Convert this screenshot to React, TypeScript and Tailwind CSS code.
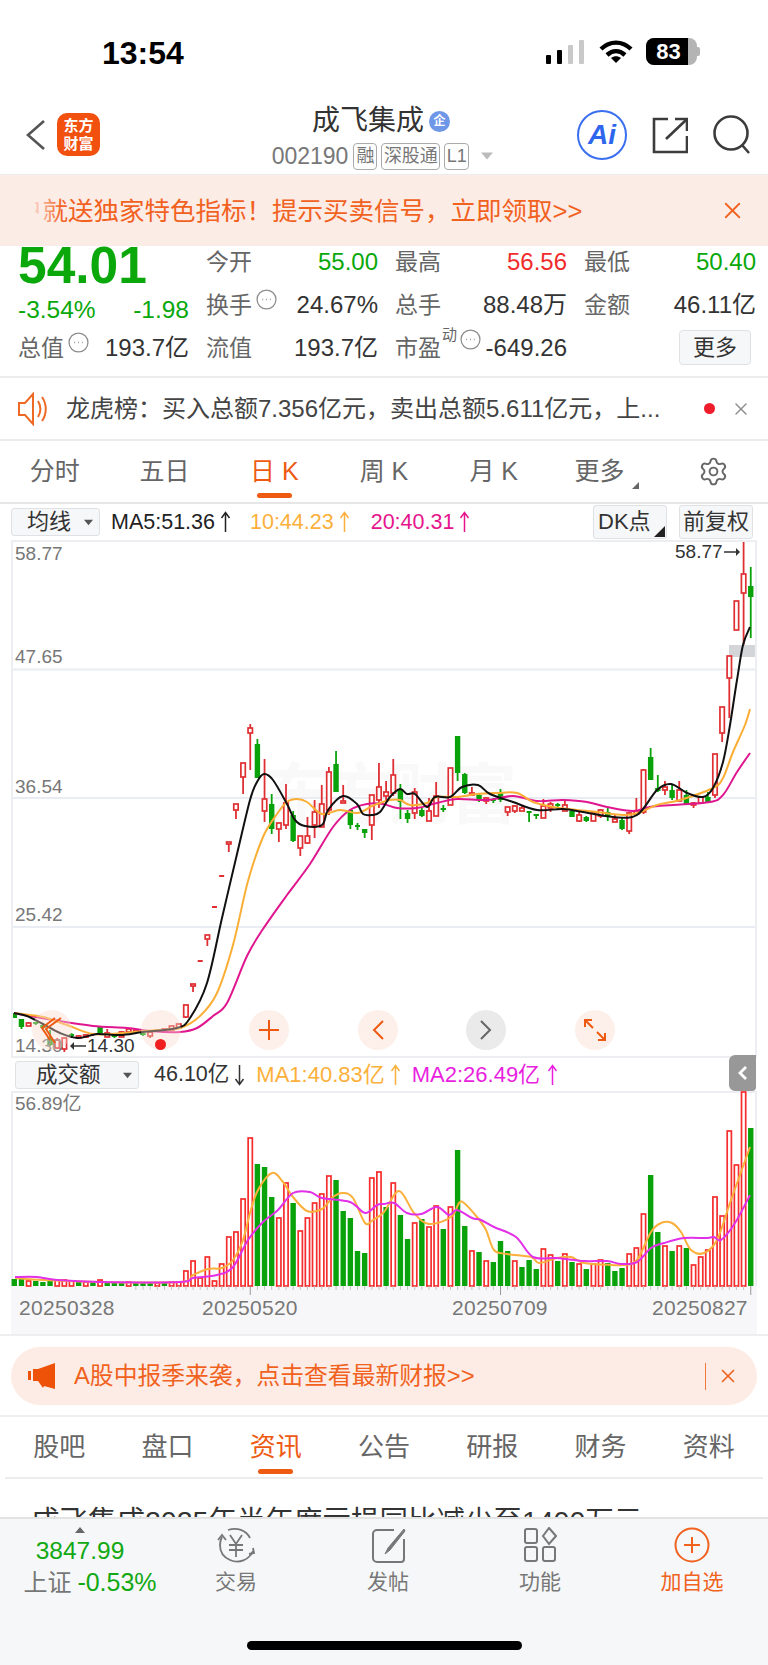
import { Settings, X } from "lucide-react";

type Candle = [number, number, number, number, "r" | "g"];

// high, body top, body bottom, low, colour (page pixels)
const candles: Candle[] = [
  [1013, 1013, 1018, 1018, "g"], [1019, 1019, 1027, 1029, "g"], [1022, 1023, 1026, 1026, "r"], [1022, 1023, 1024, 1025, "g"],
  [1024, 1025, 1028, 1029, "g"], [1030, 1038, 1045, 1046, "g"], [1038, 1040, 1048, 1049, "r"], [1038, 1038, 1049, 1052, "r"],
  [1033, 1035, 1036, 1038, "g"], [1035, 1036, 1038, 1039, "r"], [1034, 1035, 1037, 1038, "r"], [1033, 1034, 1035, 1036, "r"],
  [1026, 1027, 1033, 1034, "g"], [1029, 1033, 1037, 1037, "r"], [1033, 1035, 1037, 1038, "g"], [1031, 1032, 1037, 1037, "r"],
  [1029, 1029, 1032, 1033, "r"], [1030, 1030, 1032, 1032, "r"], [1032, 1033, 1035, 1036, "g"], [1031, 1032, 1036, 1038, "r"],
  [1030, 1030, 1031, 1032, "r"], [1029, 1029, 1031, 1031, "r"], [1026, 1026, 1030, 1030, "r"], [1024, 1024, 1028, 1028, "r"],
  [1005, 1005, 1017, 1018, "r"], [984, 984, 986, 992, "r"], [961, 961, 961, 961, "r"], [935, 935, 939, 946, "r"],
  [907, 907, 907, 907, "r"], [876, 876, 876, 876, "r"], [842, 842, 844, 852, "r"], [804, 804, 810, 819, "r"],
  [763, 763, 777, 794, "r"], [724, 728, 733, 770, "r"], [739, 744, 778, 778, "g"], [759, 799, 811, 822, "r"],
  [794, 804, 829, 834, "g"], [823, 823, 829, 842, "r"], [784, 803, 825, 829, "r"], [811, 815, 841, 842, "g"],
  [836, 836, 848, 856, "r"], [817, 836, 843, 844, "r"], [800, 812, 825, 838, "r"], [785, 804, 827, 827, "r"],
  [767, 772, 810, 815, "r"], [751, 764, 792, 792, "g"], [785, 801, 803, 803, "r"], [809, 810, 825, 829, "g"],
  [823, 826, 827, 830, "g"], [829, 829, 833, 838, "g"], [795, 795, 825, 840, "r"], [763, 787, 800, 808, "r"],
  [781, 792, 796, 801, "r"], [759, 775, 793, 796, "r"], [784, 789, 802, 819, "g"], [810, 813, 819, 823, "g"],
  [788, 792, 813, 819, "r"], [807, 810, 816, 817, "g"], [798, 811, 821, 821, "r"], [782, 796, 816, 816, "r"],
  [805, 808, 810, 812, "g"], [768, 768, 805, 805, "r"], [736, 736, 773, 781, "g"], [773, 774, 793, 794, "g"],
  [787, 793, 795, 795, "r"], [793, 795, 799, 802, "g"], [797, 798, 801, 804, "r"], [798, 800, 801, 803, "g"],
  [789, 792, 800, 802, "g"], [807, 807, 812, 816, "r"], [805, 806, 811, 813, "r"], [805, 808, 811, 811, "r"],
  [812, 812, 813, 822, "g"], [814, 814, 816, 819, "g"], [799, 806, 818, 818, "r"], [802, 804, 808, 812, "r"],
  [803, 805, 806, 810, "g"], [801, 805, 811, 811, "r"], [811, 811, 817, 817, "g"], [810, 815, 821, 822, "r"],
  [816, 817, 821, 822, "g"], [813, 813, 821, 821, "r"], [809, 810, 816, 818, "r"], [808, 812, 817, 821, "g"],
  [815, 819, 822, 822, "r"], [818, 820, 829, 830, "g"], [812, 813, 831, 834, "r"], [798, 811, 814, 815, "r"],
  [769, 770, 812, 814, "r"], [748, 757, 780, 780, "g"], [775, 788, 791, 792, "g"], [781, 787, 790, 795, "r"],
  [784, 790, 798, 800, "g"], [781, 790, 801, 801, "r"], [790, 795, 804, 804, "g"], [802, 803, 805, 808, "r"],
  [796, 797, 803, 803, "r"], [792, 797, 802, 802, "g"], [754, 754, 795, 798, "r"], [707, 707, 733, 742, "r"],
  [656, 656, 678, 718, "r"], [601, 601, 630, 630, "r"], [542, 574, 593, 645, "r"], [567, 586, 597, 638, "g"],
];

const ma5 = [[14, 1013], [27, 1016], [43, 1024], [60, 1033], [78, 1038], [97, 1034], [120, 1035], [143, 1032], [177, 1028], [190, 1018], [207, 983], [222, 918], [237, 854], [250, 800], [257, 782], [264, 774], [273, 780], [287, 804], [295, 820], [305, 826], [322, 825], [328, 810], [343, 796], [357, 804], [363, 814], [372, 815], [380, 812], [390, 797], [400, 789], [407, 794], [415, 794], [427, 807], [435, 797], [450, 797], [462, 787], [478, 785], [490, 794], [513, 802], [537, 810], [563, 809], [583, 812], [613, 817], [637, 815], [657, 790], [671, 784], [687, 793], [703, 797], [713, 788], [723, 762], [730, 725], [737, 680], [743, 645], [750, 627]];
const ma10 = [[14, 1013], [43, 1017], [67, 1025], [93, 1034], [123, 1033], [157, 1030], [180, 1028], [200, 1016], [217, 993], [233, 945], [248, 881], [263, 837], [277, 814], [287, 802], [297, 799], [307, 802], [322, 814], [340, 810], [358, 813], [372, 806], [380, 803], [390, 800], [400, 800], [410, 805], [427, 803], [437, 797], [457, 797], [477, 794], [497, 793], [517, 793], [533, 802], [553, 807], [577, 810], [597, 812], [623, 815], [638, 813], [657, 805], [680, 800], [713, 788], [723, 778], [733, 752], [745, 725], [750, 709]];
const ma20 = [[14, 1013], [53, 1020], [93, 1026], [127, 1028], [150, 1031], [180, 1032], [197, 1028], [213, 1016], [227, 1003], [247, 956], [263, 929], [287, 895], [310, 864], [333, 827], [350, 810], [367, 804], [383, 804], [397, 808], [417, 808], [437, 803], [457, 799], [487, 800], [513, 796], [537, 801], [563, 800], [587, 802], [607, 807], [633, 811], [650, 807], [673, 805], [710, 802], [723, 795], [737, 772], [750, 753]];

// tops of the volume bars, red bars are hollow
const volumes: [number, "r" | "g"][] = [
  [1279, "g"], [1279, "g"], [1281, "r"], [1281, "g"], [1282, "g"], [1281, "g"], [1280, "r"], [1280, "r"], [1281, "r"], [1281, "g"], [1282, "r"], [1282, "g"], [1280, "r"], [1282, "g"], [1282, "g"], [1282, "g"], [1282, "r"], [1282, "g"], [1282, "g"], [1282, "g"], [1283, "r"], [1282, "g"], [1282, "r"], [1282, "r"],
  [1271, "r"], [1261, "r"], [1278, "r"], [1257, "r"], [1281, "r"], [1264, "r"], [1237, "r"], [1232, "r"], [1199, "r"], [1138, "r"], [1164, "g"], [1167, "g"], [1197, "g"], [1218, "r"], [1183, "r"], [1203, "g"], [1231, "r"], [1218, "r"], [1203, "r"], [1194, "r"], [1176, "r"], [1180, "g"], [1211, "g"], [1218, "g"], [1251, "g"], [1253, "g"], [1178, "r"], [1172, "r"],
  [1207, "g"], [1183, "r"], [1215, "g"], [1239, "g"], [1223, "r"], [1219, "g"], [1227, "r"], [1206, "r"], [1229, "g"], [1207, "r"], [1150, "g"], [1226, "g"], [1251, "r"], [1252, "g"], [1261, "r"], [1262, "g"], [1241, "g"], [1251, "g"], [1261, "r"], [1267, "g"], [1260, "g"], [1269, "g"], [1249, "r"], [1255, "r"], [1261, "g"], [1254, "r"], [1262, "g"], [1264, "r"], [1269, "g"], [1264, "r"], [1260, "r"], [1263, "g"], [1271, "g"], [1268, "g"], [1254, "r"], [1248, "r"], [1214, "r"], [1175, "g"], [1232, "g"], [1246, "r"], [1251, "g"], [1246, "r"], [1248, "g"], [1265, "r"], [1257, "r"], [1250, "r"], [1197, "r"], [1216, "r"], [1131, "r"], [1165, "r"], [1092, "r"], [1128, "g"],
];

const volMa1 = [[15, 1278], [43, 1280], [100, 1282], [180, 1282], [193, 1275], [208, 1269], [222, 1268], [233, 1260], [243, 1240], [250, 1213], [258, 1190], [272, 1173], [283, 1182], [293, 1197], [307, 1211], [322, 1209], [333, 1197], [343, 1193], [353, 1198], [365, 1223], [373, 1220], [384, 1212], [399, 1191], [414, 1213], [429, 1224], [451, 1217], [459, 1203], [464, 1203], [477, 1217], [486, 1230], [494, 1250], [507, 1254], [531, 1257], [539, 1263], [557, 1258], [571, 1257], [584, 1263], [611, 1265], [624, 1265], [637, 1260], [651, 1232], [661, 1223], [672, 1223], [681, 1232], [691, 1250], [704, 1253], [717, 1240], [731, 1200], [750, 1147]];
const volMa2 = [[15, 1277], [37, 1277], [57, 1280], [100, 1282], [180, 1282], [193, 1278], [217, 1275], [233, 1267], [248, 1240], [263, 1222], [278, 1210], [293, 1193], [310, 1192], [322, 1198], [350, 1202], [365, 1213], [377, 1205], [384, 1204], [394, 1203], [407, 1213], [421, 1214], [437, 1207], [449, 1215], [457, 1210], [472, 1218], [481, 1220], [494, 1227], [516, 1237], [533, 1257], [557, 1258], [584, 1261], [607, 1261], [621, 1264], [637, 1262], [651, 1248], [664, 1243], [684, 1238], [707, 1238], [714, 1237], [721, 1240], [735, 1223], [750, 1195]];

const candleX = (i: number) => 14.3 + 7.15 * i;

// catmull-rom through the points so the averages read as curves
function smooth(pts: number[][]) {
  let d = `M${pts[0][0]} ${pts[0][1]}`;
  for (let i = 0; i < pts.length - 1; i++) {
    const p0 = pts[Math.max(i - 1, 0)];
    const p1 = pts[i];
    const p2 = pts[i + 1];
    const p3 = pts[Math.min(i + 2, pts.length - 1)];
    const c1x = p1[0] + (p2[0] - p0[0]) / 6;
    const c1y = p1[1] + (p2[1] - p0[1]) / 6;
    const c2x = p2[0] - (p3[0] - p1[0]) / 6;
    const c2y = p2[1] - (p3[1] - p1[1]) / 6;
    d += ` C${c1x.toFixed(1)} ${c1y.toFixed(1)} ${c2x.toFixed(1)} ${c2y.toFixed(1)} ${p2[0]} ${p2[1]}`;
  }
  return d;
}

function Caret({ className }: { className: string }) {
  return (
    <svg className={className} viewBox="0 0 10 6" fill="currentColor">
      <path d="M0 0h10L5 6z" />
    </svg>
  );
}

function Arrow({ down }: { down?: boolean }) {
  return (
    <svg className={`ml-[5px] w-[11px] h-[22px] ${down ? "rotate-180" : ""}`} viewBox="0 0 11 22" fill="none" stroke="currentColor" strokeWidth="1.500">
      <path d="M5.500 21V2M1.500 7l4-5.500 4 5.500" />
    </svg>
  );
}

function SideArrow({ left }: { left?: boolean }) {
  return (
    <svg className={`w-[16px] h-[10px] ${left ? "rotate-180" : ""}`} viewBox="0 0 16 10" fill="#333">
      <path d="M0 4.200h12V1l4 4-4 4V5.800H0z" />
    </svg>
  );
}

function StatusBar() {
  return (
    <div className="h-[100px] flex items-start justify-between pt-[34px] pl-[102px] pr-[68px]">
      <span className="text-[32px] leading-[38px] font-bold text-black">13:54</span>
      <div className="flex items-center pt-[4px]">
        <div className="flex items-end gap-[6px] h-[24px]">
          <div className="w-[5px] h-[9px] rounded-[1px] bg-black" />
          <div className="w-[5px] h-[14px] rounded-[1px] bg-black" />
          <div className="w-[5px] h-[19px] rounded-[1px] bg-[#c9c9c9]" />
          <div className="w-[5px] h-[24px] rounded-[1px] bg-[#c9c9c9]" />
        </div>
        <svg className="ml-[15px] w-[34px] h-[24px]" viewBox="0 0 34 24" fill="none" stroke="black" strokeWidth="4.400">
          <path d="M2 9c9-8.500 21-8.500 30 0" />
          <path d="M8 15c5.500-5 12.500-5 18 0" />
          <path d="M17 23l-5-5c3-2.500 7-2.500 10 0z" fill="black" stroke="none" />
        </svg>
        <div className="ml-[13px] flex items-center">
          <div className="w-[51px] h-[27px] rounded-[8px] overflow-hidden flex bg-[#b4b4b4]">
            <div className="w-[42px] h-full bg-black" />
          </div>
          <div className="w-[3px] h-[9px] rounded-r-[2px] bg-[#b4b4b4]" />
          <span className="absolute w-[51px] pr-[6px] text-center text-white font-bold text-[22px] leading-[27px]">83</span>
        </div>
      </div>
    </div>
  );
}

function Header() {
  return (
    <div className="relative h-[75px] border-b border-[#ececec]">
      <div className="absolute left-[25px] top-[19px]">
        <svg className="w-[21px] h-[32px]" viewBox="0 0 21 32" fill="none" stroke="#555" strokeWidth="2.600">
          <path d="M19 2L3 16l16 14" />
        </svg>
      </div>
      <div className="absolute left-[57px] top-[13px] w-[43px] h-[43px] rounded-[10px] bg-[#f1500f] flex items-center justify-center text-white font-bold text-[15px] leading-[18px] text-center">
        东方
        <br />
        财富
      </div>
      <div className="flex flex-col items-center pr-[6px]">
        <div className="flex items-center h-[40px] mt-[1px]">
          <span className="text-[28px] leading-[38px] text-[#333]">成飞集成</span>
          <span className="ml-[5px] w-[21px] h-[21px] rounded-full bg-[#6f97e8] text-white text-[12px] font-bold leading-[21px] text-center">企</span>
        </div>
        <div className="flex items-center h-[30px] ml-[3px] text-[#777]">
          <span className="text-[23px] leading-[28px] mr-[5px]">002190</span>
          <span className="h-[27px] w-[24px] border border-[#aaa] rounded-[4px] text-[18px] leading-[25px] text-center">融</span>
          <span className="ml-[4px] h-[27px] w-[59px] border border-[#aaa] rounded-[4px] text-[18px] leading-[25px] text-center">深股通</span>
          <span className="ml-[4px] h-[27px] w-[25px] border border-[#aaa] rounded-[4px] text-[18px] leading-[25px] text-center">L1</span>
          <Caret className="ml-[12px] w-[12px] h-[8px] text-[#bbb]" />
        </div>
      </div>
      <div className="absolute right-[141px] top-[10px] w-[50px] h-[50px] rounded-full border-[2.500px] border-[#3a6ff0] flex items-center justify-center text-[#2f66ee] text-[28px] font-bold italic">
        Ai
      </div>
      <svg className="absolute left-[652px] top-[17px] w-[36px] h-[37px]" viewBox="0 0 36 37" fill="none" stroke="#3c3c3c" strokeWidth="2.600">
        <path d="M16 2H2v33h33V19" />
        <path d="M14 22L34 3" />
        <path d="M23 2h12v12" />
      </svg>
      <svg className="absolute left-[713px] top-[15px] w-[38px] h-[39px]" viewBox="0 0 38 39" fill="none" stroke="#3c3c3c" strokeWidth="2.600">
        <circle cx="18" cy="18" r="16.500" />
        <path d="M29 30l7 8" />
      </svg>
    </div>
  );
}

function TopBanner() {
  return (
    <div className="relative h-[71px] bg-[#fcece6] flex items-center text-[#f2621f]">
      <div className="ml-[35px] w-[560px] overflow-hidden whitespace-nowrap text-[25.500px] leading-[34px]">
        <span className="ml-[-18px]">户就送独家特色指标！提示买卖信号，立即领取&gt;&gt;</span>
      </div>
      <div className="absolute left-[28px] top-0 h-full w-[34px] bg-gradient-to-r from-[#fcece6] to-transparent" />
      <X className="absolute left-[719px] top-[22px] w-[27px] h-[27px]" strokeWidth={1.600} />
    </div>
  );
}

function Hint() {
  return (
    <svg className="absolute w-[21px] h-[21px]" viewBox="0 0 20 20" fill="none" stroke="#8d8d8d" strokeWidth="1.200">
      <circle cx="10" cy="10" r="9" />
      <path d="M6 10h.8M9.600 10h.8M13.200 10h.8" strokeWidth="1.600" />
    </svg>
  );
}

function Cell({ label, value, color, hint }: { label: string; value: string; color: string; hint?: boolean }) {
  return (
    <div className="relative flex items-center justify-between">
      <span className="text-[#666] text-[23px]">{label}</span>
      {hint && (
        <span className="absolute left-[50px] top-[-1px]">
          <Hint />
        </span>
      )}
      <span className={`text-[24px] ${color}`}>{value}</span>
    </div>
  );
}

function Quote() {
  return (
    <div className="h-[132px] border-b-2 border-[#ececec] pl-[18px] pr-[11px]">
      <div className="grid grid-cols-[171px_172px_172px_172px] grid-rows-[38px_42px_44px] gap-x-[17px] leading-[30px]">
        <div className="pt-[1px] text-[51.500px] leading-[36px] font-bold text-[#0aa80a]">54.01</div>
        <div className="pb-[6px] flex items-center">
          <div className="flex-1"><Cell label="今开" value="55.00" color="text-[#0aa80a]" /></div>
        </div>
        <div className="pb-[6px] flex items-center">
          <div className="flex-1"><Cell label="最高" value="56.56" color="text-[#f02c2c]" /></div>
        </div>
        <div className="pb-[6px] flex items-center">
          <div className="flex-1"><Cell label="最低" value="50.40" color="text-[#0aa80a]" /></div>
        </div>

        <div className="flex items-end justify-between pb-[1px] text-[24.500px] text-[#0aa80a]">
          <span>-3.54%</span>
          <span>-1.98</span>
        </div>
        <div className="flex items-center">
          <div className="flex-1"><Cell label="换手" value="24.67%" color="text-[#333]" hint /></div>
        </div>
        <div className="flex items-center">
          <div className="flex-1"><Cell label="总手" value="88.48万" color="text-[#333]" /></div>
        </div>
        <div className="flex items-center">
          <div className="flex-1"><Cell label="金额" value="46.11亿" color="text-[#333]" /></div>
        </div>

        <div className="flex items-center">
          <div className="flex-1"><Cell label="总值" value="193.7亿" color="text-[#333]" hint /></div>
        </div>
        <div className="flex items-center">
          <div className="flex-1"><Cell label="流值" value="193.7亿" color="text-[#333]" /></div>
        </div>
        <div className="relative flex items-center justify-between text-[23px]">
          <span className="text-[#666]">市盈</span>
          <span className="absolute left-[47px] top-[0px] text-[15px] leading-[18px] text-[#666]">动</span>
          <span className="absolute left-[65px] top-[3px]"><Hint /></span>
          <span className="text-[#333] text-[24px]">-649.26</span>
        </div>
        <div className="flex items-center justify-end pr-[5px] pb-[2px]">
          <div className="w-[72px] h-[35px] rounded-[4px] bg-[#f6f7f9] border border-[#dfe1e5] text-[22px] leading-[33px] text-center text-[#333]">更多</div>
        </div>
      </div>
    </div>
  );
}

function Notice() {
  return (
    <div className="h-[63px] border-b-2 border-[#ececec] flex items-center pl-[18px] pr-[17px]">
      <svg className="w-[30px] h-[34px] shrink-0" viewBox="0 0 30 34" fill="none" stroke="#ee6a24" strokeWidth="2">
        <path d="M1 11h6l8-9v30l-8-9H1z" />
        <path d="M20 9c3 5 3 11 0 16" />
        <path d="M24 5c5 7 5 17 0 24" />
      </svg>
      <span className="ml-[18px] text-[24px] text-[#444] whitespace-nowrap">龙虎榜：买入总额7.356亿元，卖出总额5.611亿元，上...</span>
      <div className="ml-auto w-[11px] h-[11px] rounded-full bg-[#ef1c2b]" />
      <X className="ml-[16px] w-[20px] h-[20px] text-[#8e8e8e]" strokeWidth={1.800} />
    </div>
  );
}

function KTabs() {
  const tabs = ["分时", "五日", "日 K", "周 K", "月 K", "更多"];
  return (
    <div className="h-[63px] border-b-2 border-[#e6e6e6] grid grid-cols-7 items-center text-[#666] text-[25px]">
      {tabs.map((t) => (
        <div key={t} className={`relative h-full flex items-center justify-center ${t === "更多" ? "pr-[8px]" : ""}`}>
          <span className={t === "日 K" ? "text-[#ee5a12]" : ""}>{t}</span>
          {t === "日 K" && <div className="absolute bottom-[4px] w-[35px] h-[5px] rounded-full bg-[#ee5a12]" />}
          {t === "更多" && (
            <svg className="absolute left-[83px] top-[41px] w-[7px] h-[7px]" viewBox="0 0 7 7" fill="#666">
              <path d="M7 0v7H0z" />
            </svg>
          )}
        </div>
      ))}
      <div className="flex justify-center">
        <Settings className="w-[31px] h-[31px] text-[#666]" strokeWidth={1.500} />
      </div>
    </div>
  );
}

function MaRow() {
  return (
    <div className="h-[36px] flex items-center text-[21.500px] whitespace-nowrap">
      <div className="ml-[11px] w-[89px] h-[28px] rounded-[3px] bg-[#f6f7f9] border border-[#dfe1e5] relative text-[22px] leading-[26px] pl-[15px] text-[#333]">
        均线
        <Caret className="absolute right-[6px] top-[10px] w-[9px] h-[7px] text-[#555]" />
      </div>
      <span className="ml-[11px] text-[#222]">MA5:51.36</span>
      <span className="text-[#222]"><Arrow /></span>
      <span className="ml-[19px] text-[#fbb03b]">10:44.23</span>
      <span className="text-[#fbb03b]"><Arrow /></span>
      <span className="ml-[21px] text-[#e6148c]">20:40.31</span>
      <span className="text-[#e6148c]"><Arrow /></span>
      <div className="ml-auto relative w-[74px] h-[34px] rounded-[3px] bg-[#f6f7f9] border border-[#dfe1e5] text-[22px] leading-[32px] pl-[4px] text-[#333]">
        DK点
        <svg className="absolute right-[1px] bottom-[1px] w-[11px] h-[11px]" viewBox="0 0 10 10" fill="#222">
          <path d="M10 0v10H0z" />
        </svg>
      </div>
      <div className="ml-[12px] mr-[15px] w-[74px] h-[34px] rounded-[3px] bg-[#f6f7f9] border border-[#dfe1e5] text-[22px] leading-[32px] text-center text-[#333]">前复权</div>
    </div>
  );
}

function CircleBtn({ gray, children }: { gray?: boolean; children: React.ReactNode }) {
  return (
    <div className={`w-[40px] h-[40px] rounded-full flex items-center justify-center ${gray ? "bg-[#e9e9e9]/95" : "bg-[#fbd9cb]/40"}`}>
      {children}
    </div>
  );
}

function PriceChart() {
  return (
    <div className="relative mx-[11px] w-[746px] h-[518px] border-x-2 border-b-2 border-t-2 border-[#eceef2] overflow-hidden">
      <div className="absolute left-[252px] top-[213px] text-[66px] leading-[80px] font-bold text-[#f9f9f9] tracking-[-4px] whitespace-nowrap">东方财富</div>
      <svg className="absolute left-[-2px] top-[-2px] w-[746px] h-[518px]" viewBox="11 540 746 518" fill="none">
        <line x1="11" x2="757" y1="669.500" y2="669.500" stroke="#e9ecf2" strokeWidth="2" />
        <line x1="11" x2="757" y1="798" y2="798" stroke="#e9ecf2" strokeWidth="2" />
        <line x1="11" x2="757" y1="927" y2="927" stroke="#e9ecf2" strokeWidth="2" />
        <rect x="729" y="645" width="28" height="12" fill="#d3d5d9" />
        {candles.map(([h, t, b, l, c], i) => {
          const x = candleX(i);
          const col = c === "r" ? "#df2f33" : "#0aa20a";
          const dash = b - t <= 1;
          return (
            <g key={i}>
              <line x1={x} x2={x} y1={h} y2={t} stroke={col} strokeWidth="1.800" />
              <line x1={x} x2={x} y1={b} y2={l} stroke={col} strokeWidth="1.800" />
              {dash ? (
                <line x1={x - 2.500} x2={x + 2.500} y1={t} y2={t} stroke={col} strokeWidth="2" />
              ) : c === "r" ? (
                <rect x={x - 2.200} y={t} width="4.400" height={b - t} fill="white" stroke={col} strokeWidth="1.700" />
              ) : (
                <rect x={x - 2.700} y={t} width="5.400" height={b - t} fill={col} />
              )}
            </g>
          );
        })}
        <path d={smooth(ma20)} stroke="#e0168f" strokeWidth="2" />
        <path d={smooth(ma10)} stroke="#fbae35" strokeWidth="2" />
        <path d={smooth(ma5)} stroke="#111" strokeWidth="2" />
      </svg>

      <span className="absolute left-[2px] top-[1px] text-[19px] leading-[22px] text-[#777]">58.77</span>
      <span className="absolute left-[2px] top-[104px] text-[19px] leading-[22px] text-[#777]">47.65</span>
      <span className="absolute left-[2px] top-[234px] text-[19px] leading-[22px] text-[#777]">36.54</span>
      <span className="absolute left-[2px] top-[362px] text-[19px] leading-[22px] text-[#777]">25.42</span>
      <span className="absolute left-[2px] top-[493px] text-[19px] leading-[22px] text-[#777]">14.30</span>
      <div className="absolute left-[662px] top-[-1px] flex items-center gap-[1px] text-[19px] leading-[22px] text-[#333]">
        58.77
        <SideArrow />
      </div>
      <div className="absolute left-[57px] top-[493px] flex items-center gap-[1px] text-[19px] leading-[22px] text-[#333]">
        <SideArrow left />
        14.30
      </div>

      <div className="absolute left-[19px] top-[468px] w-[583px] flex justify-between">
        <CircleBtn>
          <svg className="w-[24px] h-[28px]" viewBox="0 0 24 28" fill="none" stroke="#ee5a12" strokeWidth="2">
            <path d="M21 2L6 13l9 14" />
            <path d="M15 2L2 12l8 12" />
          </svg>
        </CircleBtn>
        <CircleBtn>
          <div className="w-[11px] h-[11px] rounded-full bg-[#ef1f20] mt-[28px]" />
        </CircleBtn>
        <CircleBtn>
          <svg className="w-[20px] h-[20px]" viewBox="0 0 20 20" stroke="#ee5a12" strokeWidth="2">
            <path d="M10 0v20M0 10h20" />
          </svg>
        </CircleBtn>
        <CircleBtn>
          <svg className="w-[12px] h-[20px]" viewBox="0 0 12 20" fill="none" stroke="#ee5a12" strokeWidth="2">
            <path d="M11 1L2 10l9 9" />
          </svg>
        </CircleBtn>
        <CircleBtn gray>
          <svg className="w-[12px] h-[20px]" viewBox="0 0 12 20" fill="none" stroke="#666" strokeWidth="2">
            <path d="M1 1l9 9-9 9" />
          </svg>
        </CircleBtn>
        <CircleBtn>
          <svg className="w-[22px] h-[22px]" viewBox="0 0 22 22" fill="none" stroke="#ee5a12" strokeWidth="2">
            <path d="M2 2l7 7M1 8V1h7" />
            <path d="M20 20l-7-7M21 14v7h-7" />
          </svg>
        </CircleBtn>
      </div>
    </div>
  );
}

function VolRow() {
  return (
    <div className="relative h-[33px] flex items-center text-[21.500px] whitespace-nowrap">
      <div className="ml-[15px] w-[124px] h-[28px] rounded-[3px] bg-[#f6f7f9] border border-[#dfe1e5] relative text-[21.500px] leading-[26px] pl-[20px] text-[#333]">
        成交额
        <Caret className="absolute right-[6px] top-[10px] w-[9px] h-[7px] text-[#555]" />
      </div>
      <span className="ml-[15px] text-[#333]">46.10亿</span>
      <span className="text-[#333]"><Arrow down /></span>
      <span className="ml-[11px] text-[22px] text-[#fbb03b]">MA1:40.83亿</span>
      <span className="text-[#fbb03b]"><Arrow /></span>
      <span className="ml-[11px] text-[22px] text-[#e91fe0]">MA2:26.49亿</span>
      <span className="ml-[2px] text-[#e91fe0]"><Arrow /></span>
      <div className="absolute left-[729px] top-[-3px] w-[27px] h-[36px] rounded-l-[6px] rounded-br-[4px] bg-[#989898] flex items-center justify-center">
        <svg className="w-[11px] h-[16px]" viewBox="0 0 11 16" fill="none" stroke="white" strokeWidth="2.800">
          <path d="M9 2L3 8l6 6" />
        </svg>
      </div>
    </div>
  );
}

function VolChart() {
  return (
    <div className="relative mx-[11px] w-[746px] h-[243px] border-x-2 border-t-2 border-[#eceef2]">
      <span className="absolute left-[2px] top-[0px] text-[19px] leading-[22px] text-[#777]">56.89亿</span>
      <div className="absolute left-[-2px] top-[193px] w-[746px] h-[48px] bg-[#f7f7f9]" />
      <svg className="absolute left-[-2px] top-[-2px] w-[746px] h-[244px]" viewBox="11 1091 746 244" fill="none">
        {volumes.map(([top, c], i) => {
          const x = candleX(i);
          const major = i === 33 || i === 68 || i === 103;
          const bar = c === "r" ? (
            <rect x={x - 2.100} y={top} width="4.200" height={1286 - top} fill="white" stroke="#f62d2d" strokeWidth="1.700" />
          ) : (
            <rect x={x - 2.700} y={top} width="5.400" height={1286 - top} fill="#0aa20a" />
          );
          return (
            <g key={i}>
              {bar}
              {i > 16 && <line x1={x} x2={x} y1="1286" y2={major ? 1295 : 1290} stroke={major ? "#999" : "#c4c4c4"} strokeWidth="1" />}
            </g>
          );
        })}
        <path d={smooth(volMa1)} stroke="#fbb03b" strokeWidth="2" />
        <path d={smooth(volMa2)} stroke="#e22fe8" strokeWidth="2" />
      </svg>
      <span className="absolute left-[6px] top-[203px] text-[21px] leading-[24px] text-[#777] tracking-[0.3px]">20250328</span>
      <span className="absolute left-[189px] top-[203px] text-[21px] leading-[24px] text-[#777] tracking-[0.3px]">20250520</span>
      <span className="absolute left-[439px] top-[203px] text-[21px] leading-[24px] text-[#777] tracking-[0.3px]">20250709</span>
      <span className="absolute left-[639px] top-[203px] text-[21px] leading-[24px] text-[#777] tracking-[0.3px]">20250827</span>
    </div>
  );
}

function PromoBanner() {
  return (
    <div className="h-[83px] border-t-2 border-b-2 border-[#eeeeee] px-[11px] pt-[11px]">
      <div className="h-[58px] rounded-full bg-[#fdece5] flex items-center pl-[17px] text-[#f0621e]">
        <svg className="w-[28px] h-[26px]" viewBox="0 0 28 26" fill="#ee5208">
          <path d="M0 8h3v9H0zM5 6h5L27 0v26l-11-3-1 2-5-7H5z" />
        </svg>
        <span className="ml-[18px] text-[23.800px] whitespace-nowrap">A股中报季来袭，点击查看最新财报&gt;&gt;</span>
        <div className="ml-[230px] w-px h-[27px] bg-[#ef7a3e]" />
        <X className="ml-[11px] w-[22px] h-[22px]" strokeWidth={1.800} />
      </div>
    </div>
  );
}

function InfoTabs() {
  const tabs = ["股吧", "盘口", "资讯", "公告", "研报", "财务", "资料"];
  return (
    <div className="mx-[5px] h-[62px] border-b-2 border-[#ececec] grid grid-cols-7 text-[26px] text-[#666]">
      {tabs.map((t) => (
        <div key={t} className="relative flex items-center justify-center">
          <span className={t === "资讯" ? "text-[#ee5a12]" : ""}>{t}</span>
          {t === "资讯" && <div className="absolute bottom-[3px] w-[35px] h-[5px] rounded-full bg-[#ee5a12]" />}
        </div>
      ))}
    </div>
  );
}

function Footer() {
  return (
    <div className="relative h-[148px] bg-[#f6f7f9] border-t-2 border-[#e3e3e3]">
      <div className="flex">
        <div className="w-[160px] flex flex-col items-center">
          <Caret className="mt-[8px] w-[12px] h-[6px] text-[#666] rotate-180" />
          <span className="mt-[4px] text-[24.500px] leading-[28px] text-[#12a912]">3847.99</span>
          <div className="mt-[1px] ml-[20px] text-[24px] leading-[32px] whitespace-nowrap">
            <span className="text-[#777]">上证</span>
            <span className="ml-[6px] text-[25px] text-[#12a912]">-0.53%</span>
          </div>
        </div>
        <div className="flex-1 grid grid-cols-4 pt-[8px] text-[21px] text-[#777]">
          <div className="flex flex-col items-center">
            <svg className="w-[40px] h-[36px]" viewBox="0 0 40 36" fill="none" stroke="#777" strokeWidth="1.800">
              <path d="M12 3c9-3 18 0 22 8M37 24c-4 9-14 13-23 9-7-3-10-9-10-15 0-3 .5-5 2-8" />
              <path d="M2 13l4-5 4 5M33 27l5-1-1-5" />
              <path d="M14 8l6 9 6-9M13 18h14M13 23h14M20 17v13" />
            </svg>
            <span className="mt-[3px]">交易</span>
          </div>
          <div className="flex flex-col items-center">
            <svg className="w-[36px] h-[36px]" viewBox="0 0 36 36" fill="none" stroke="#777" strokeWidth="2">
              <path d="M24 3H7a4 4 0 0 0-4 4v24a4 4 0 0 0 4 4h24a3 3 0 0 0 3-3V12" />
              <path d="M34 2L18 21l-3 6 5-4L35 4z" fill="#777" strokeWidth="1" />
            </svg>
            <span className="mt-[3px]">发帖</span>
          </div>
          <div className="flex flex-col items-center">
            <svg className="w-[34px] h-[36px]" viewBox="0 0 34 36" fill="none" stroke="#777" strokeWidth="2">
              <rect x="2" y="2" width="12" height="14" rx="2" />
              <rect x="2" y="20" width="12" height="14" rx="2" />
              <rect x="20" y="20" width="12" height="14" rx="2" />
              <path d="M26 1l7 8-7 8-6-8z" />
            </svg>
            <span className="mt-[3px]">功能</span>
          </div>
          <div className="flex flex-col items-center text-[#f0621e]">
            <svg className="w-[36px] h-[36px]" viewBox="0 0 36 36" fill="none" stroke="#f0621e" strokeWidth="2">
              <circle cx="18" cy="18" r="16.500" />
              <path d="M18 10v16M10 18h16" />
            </svg>
            <span className="mt-[3px]">加自选</span>
          </div>
        </div>
      </div>
      <div className="absolute left-[247px] top-[122px] w-[275px] h-[9px] rounded-full bg-black" />
    </div>
  );
}

export default function App() {
  return (
    <div className="relative w-[768px] h-[1665px] overflow-hidden bg-white font-['Liberation_Sans','Noto_Sans_CJK_SC',sans-serif]">
      <StatusBar />
      <Header />
      <TopBanner />
      <Quote />
      <Notice />
      <KTabs />
      <MaRow />
      <PriceChart />
      <VolRow />
      <VolChart />
      <PromoBanner />
      <InfoTabs />
      <div className="h-[38px] overflow-hidden pl-[31px] pt-[24px] text-[28.500px] leading-[37px] text-[#333] whitespace-nowrap">
        成飞集成2025年半年度亏损同比减少至1400万元
      </div>
      <Footer />
    </div>
  );
}
